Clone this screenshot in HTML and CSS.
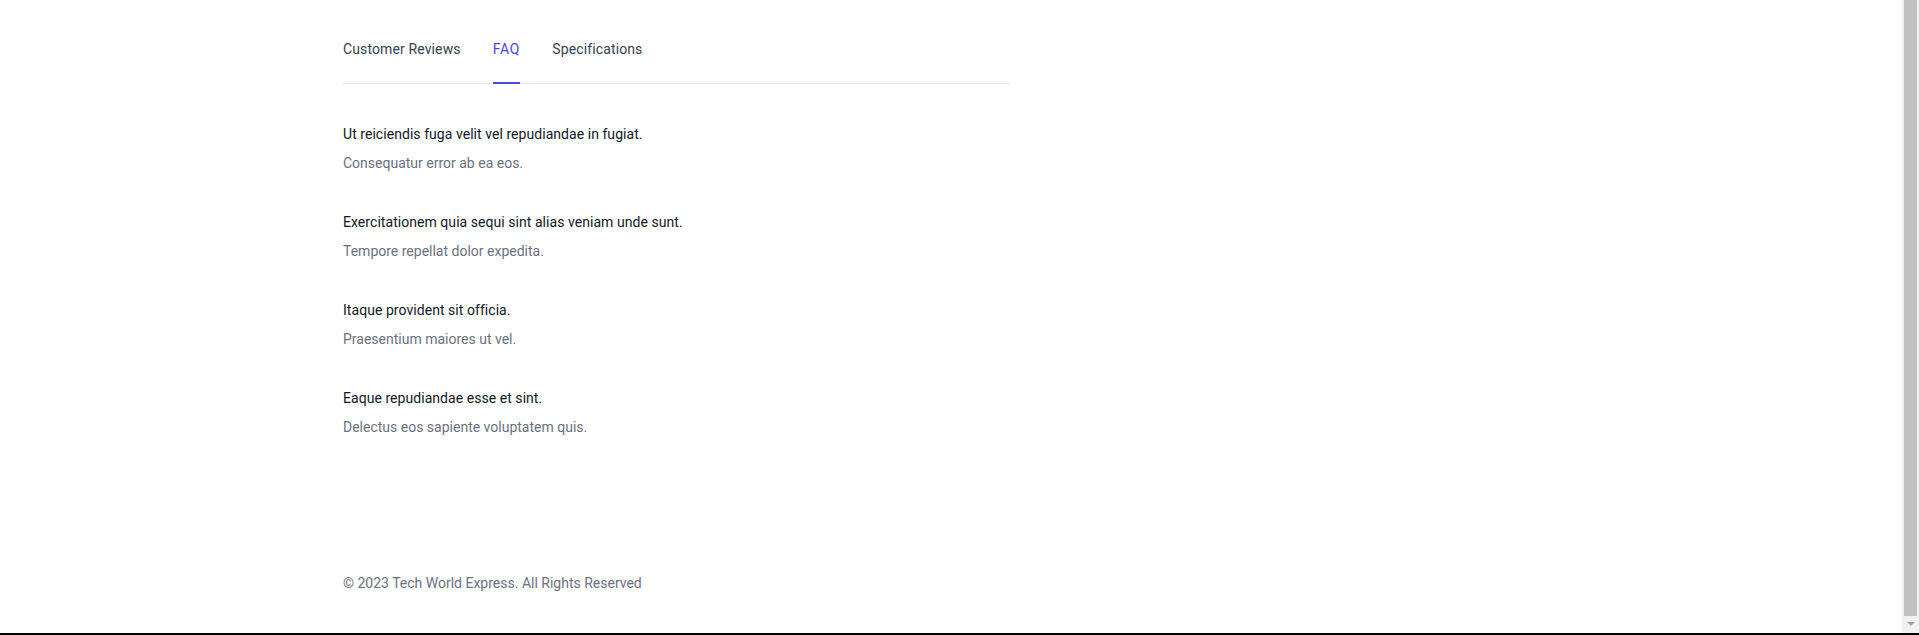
FILE: index.html
```html
<!DOCTYPE html>
<html lang="en">
<head>
<meta charset="utf-8">
<title>FAQ</title>
<link rel="stylesheet" href="styles.css">
</head>
<body>
<div class="screen">
  <div class="viewport">
    <main class="main">
      <div class="container">
        <nav class="tabs">
          <a class="tab">Customer Reviews</a>
          <a class="tab tab-active">FAQ</a>
          <a class="tab">Specifications</a>
        </nav>
        <dl class="faq">
          <div class="faq-item">
            <dt class="question">Ut reiciendis fuga velit vel repudiandae in fugiat.</dt>
            <dd class="answer">Consequatur error ab ea eos.</dd>
          </div>
          <div class="faq-item">
            <dt class="question">Exercitationem quia sequi sint alias veniam unde sunt.</dt>
            <dd class="answer">Tempore repellat dolor expedita.</dd>
          </div>
          <div class="faq-item">
            <dt class="question">Itaque provident sit officia.</dt>
            <dd class="answer">Praesentium maiores ut vel.</dd>
          </div>
          <div class="faq-item">
            <dt class="question">Eaque repudiandae esse et sint.</dt>
            <dd class="answer">Delectus eos sapiente voluptatem quis.</dd>
          </div>
        </dl>
        <footer class="footer">© 2023 Tech World Express. All Rights Reserved</footer>
      </div>
    </main>
    <div class="scrollbar">
      <div class="scroll-thumb"></div>
      <div class="scroll-arrow"></div>
    </div>
  </div>
  <div class="bottom-edge"></div>
</div>
</body>
</html>
```
FILE: styles.css
```css
* { box-sizing: border-box; }
html, body { margin: 0; padding: 0; background: #ffffff; }
body {
  font-family: Roboto, "Liberation Sans", sans-serif;
  font-size: 14px;
  line-height: 20px;
  color: #111827;
  overflow: hidden;
}
.screen { display: flex; flex-direction: column; height: 635px; }
.viewport { display: flex; height: 633px; }
.bottom-edge { height: 2px; background: #000; }
.main { flex: 1; min-width: 0; }
.container {
  max-width: 1280px;
  margin: 0 auto;
  padding: 39px 32px 0;
}
.tabs {
  display: flex;
  gap: 32px;
  width: 667px;
  border-bottom: 1px solid #e5e7eb;
}
.tab {
  display: block;
  padding-bottom: 23px;
  border-bottom: 2px solid transparent;
  margin-bottom: -1px;
  color: #374151;
  font-weight: 400;
  letter-spacing: 0.12px;
  cursor: pointer;
}
.tab-active { color: #4f46e5; border-bottom-color: #4f46e5; letter-spacing: 0.8px; }
.faq { margin: 40px 0 0; display: flex; flex-direction: column; gap: 39px; }
.faq-item { display: flex; flex-direction: column; gap: 9px; }
.question { margin: 0; color: #111827; letter-spacing: 0.05px; }
.answer { margin: 0; color: #6b7280; }
.footer { margin-top: 136px; color: #6b7280; }
.scrollbar {
  width: 17px;
  background: #f1f1f1;
  display: flex;
  flex-direction: column;
  align-items: center;
  padding: 0 2px;
}
.scroll-thumb { width: 13px; height: 616px; background: #c1c1c1; }
.scroll-arrow {
  margin-top: 6px;
  width: 0; height: 0;
  border-left: 4px solid transparent;
  border-right: 4px solid transparent;
  border-top: 4px solid #a3a3a3;
}
```
